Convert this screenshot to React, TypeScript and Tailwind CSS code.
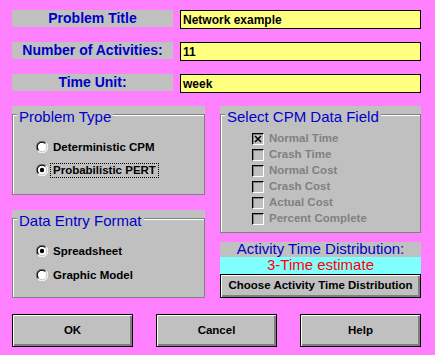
import type { ReactNode } from 'react'

const Radio = ({ checked }: { checked?: boolean }) => (
  <svg width="12" height="12" viewBox="0 0 12 12" className="shrink-0">
    <circle cx="6" cy="6" r="5.5" fill="#fff" />
    <path d="M1.8 10.2 A5.5 5.5 0 0 1 10.2 1.8" stroke="#808080" strokeWidth="1" fill="none" />
    <path d="M10.2 1.8 A5.5 5.5 0 0 1 1.8 10.2" stroke="#fff" strokeWidth="1" fill="none" />
    <path d="M2.6 9.4 A4.6 4.6 0 0 1 9.4 2.6" stroke="#000" strokeWidth="1.2" fill="none" />
    <path d="M9.4 2.6 A4.6 4.6 0 0 1 2.6 9.4" stroke="#c0c0c0" strokeWidth="1" fill="none" />
    {checked && <circle cx="6" cy="6" r="2.2" fill="#000" />}
  </svg>
)

const RadioRow = ({ label, checked, focused }: { label: string; checked?: boolean; focused?: boolean }) => (
  <div className="flex h-[16px] items-center gap-[2px]">
    <Radio checked={checked} />
    <span
      className={`border px-[2px] text-[11.5px] font-bold leading-[13px] text-black ${
        focused ? 'border-dotted border-black' : 'border-transparent'
      }`}
    >
      {label}
    </span>
  </div>
)

const Check = ({ label, checked }: { label: string; checked?: boolean }) => (
  <div className="flex h-[16px] items-center gap-[5px]">
    <div className="flex h-[12px] w-[12px] shrink-0 items-center justify-center border border-t-black border-l-black border-r-white border-b-white bg-[#c0c0c0] shadow-[inset_1px_1px_0_#808080]">
      {checked && (
        <svg width="8" height="8" viewBox="0 0 8 8">
          <path d="M1 1 L7 7 M7 1 L1 7" stroke="#000" strokeWidth="1.6" />
        </svg>
      )}
    </div>
    <span className="text-[11.5px] font-bold text-[#808080]">{label}</span>
  </div>
)

const Group = ({ title, className, children }: { title: string; className: string; children: ReactNode }) => (
  <div className={`relative bg-[#c0c0c0] ${className}`}>
    <div className="absolute top-[8px] right-0 bottom-0 left-0 border border-[#808080] shadow-[inset_1px_1px_0_#fff]" />
    <div className="relative ml-[5px] mt-[3px] w-fit bg-[#c0c0c0] px-[2px] text-[15px] leading-[16px] text-[#0000c8]">
      {title}
    </div>
    <div className="relative">{children}</div>
  </div>
)

const Field = ({ label, value }: { label: string; value: string }) => (
  <div className="flex items-start gap-[7px]">
    <div className="flex h-[17px] w-[161px] items-center justify-center bg-[#c0c0c0] text-[14px] font-bold text-[#0000c8]">
      {label}
    </div>
    <div className="flex h-[19px] w-[241px] items-center border border-black bg-[#ffff80] pl-[2px] text-[12px] font-bold text-black">
      {value}
    </div>
  </div>
)

const WinButton = ({ label, className }: { label: string; className: string }) => (
  <button
    className={`flex items-center justify-center border border-black bg-[#c0c0c0] text-[11.5px] font-bold text-black shadow-[inset_1px_1px_0_#fff,inset_-2px_-2px_0_#808080] ${className}`}
  >
    {label}
  </button>
)

export default function App() {
  return (
    <div className="h-[355px] w-[435px] overflow-hidden bg-[#ff80ff] pt-[10px] pl-[12px] font-['Liberation_Sans',Arial,sans-serif]">
      <div className="flex flex-col gap-[13px]">
        <Field label="Problem Title" value="Network example" />
        <Field label="Number of Activities:" value="11" />
        <Field label="Time Unit:" value="week" />
      </div>

      <div className="mt-[13px] flex gap-[15px]">
        <div className="flex w-[193px] flex-col gap-[15px]">
          <Group title="Problem Type" className="h-[89px]">
            <div className="mt-[14px] flex flex-col gap-[7px] pl-[24px]">
              <RadioRow label="Deterministic CPM" />
              <RadioRow label="Probabilistic PERT" checked focused />
            </div>
          </Group>
          <Group title="Data Entry Format" className="h-[88px]">
            <div className="mt-[14px] flex flex-col gap-[8px] pl-[24px]">
              <RadioRow label="Spreadsheet" checked />
              <RadioRow label="Graphic Model" />
            </div>
          </Group>
        </div>

        <div className="flex w-[201px] flex-col">
          <Group title="Select CPM Data Field" className="h-[127px]">
            <div className="mt-[6px] flex flex-col pl-[32px]">
              <Check label="Normal Time" checked />
              <Check label="Crash Time" />
              <Check label="Normal Cost" />
              <Check label="Crash Cost" />
              <Check label="Actual Cost" />
              <Check label="Percent Complete" />
            </div>
          </Group>
          <div className="mt-[9px] flex h-[15px] items-center justify-center bg-[#c0c0c0] text-[15px] text-[#0000c8]">
            Activity Time Distribution:
          </div>
          <div className="flex h-[17px] items-center justify-center bg-[#80ffff] text-[15px] text-[#ff0000]">
            3-Time estimate
          </div>
          <WinButton label="Choose Activity Time Distribution" className="h-[24px] w-full" />
        </div>
      </div>

      <div className="mt-[16px] flex gap-[23px]">
        <WinButton label="OK" className="h-[33px] w-[121px]" />
        <WinButton label="Cancel" className="h-[33px] w-[121px]" />
        <WinButton label="Help" className="h-[33px] w-[121px]" />
      </div>
    </div>
  )
}
